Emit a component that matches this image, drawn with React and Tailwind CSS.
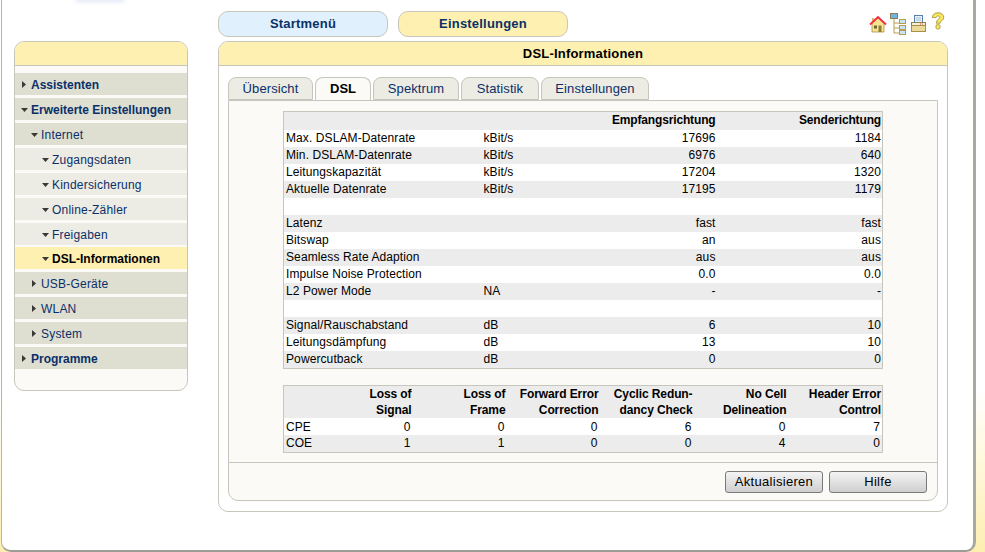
const ARIAL = "font-['Liberation_Sans',Arial,sans-serif]";

const menu = [
  { label: 'Assistenten', level: 1, open: false },
  { label: 'Erweiterte Einstellungen', level: 1, open: true },
  { label: 'Internet', level: 2, open: true },
  { label: 'Zugangsdaten', level: 3, open: true },
  { label: 'Kindersicherung', level: 3, open: true },
  { label: 'Online-Zähler', level: 3, open: true },
  { label: 'Freigaben', level: 3, open: true },
  { label: 'DSL-Informationen', level: 3, open: true, active: true },
  { label: 'USB-Geräte', level: 2, open: false },
  { label: 'WLAN', level: 2, open: false },
  { label: 'System', level: 2, open: false },
  { label: 'Programme', level: 1, open: false },
];

const tabs = [
  { label: 'Übersicht', width: 'w-[85px]' },
  { label: 'DSL', width: 'w-[56px]', active: true },
  { label: 'Spektrum', width: 'w-[86px]' },
  { label: 'Statistik', width: 'w-[78px]' },
  { label: 'Einstellungen', width: 'w-[108px]' },
];

const rates = [
  ['Max. DSLAM-Datenrate', 'kBit/s', '17696', '1184'],
  ['Min. DSLAM-Datenrate', 'kBit/s', '6976', '640'],
  ['Leitungskapazität', 'kBit/s', '17204', '1320'],
  ['Aktuelle Datenrate', 'kBit/s', '17195', '1179'],
  ['', '', '', ''],
  ['Latenz', '', 'fast', 'fast'],
  ['Bitswap', '', 'an', 'aus'],
  ['Seamless Rate Adaption', '', 'aus', 'aus'],
  ['Impulse Noise Protection', '', '0.0', '0.0'],
  ['L2 Power Mode', 'NA', '-', '-'],
  ['', '', '', ''],
  ['Signal/Rauschabstand', 'dB', '6', '10'],
  ['Leitungsdämpfung', 'dB', '13', '10'],
  ['Powercutback', 'dB', '0', '0'],
];

const errorHead = [
  ['Loss of', 'Signal'],
  ['Loss of', 'Frame'],
  ['Forward Error', 'Correction'],
  ['Cyclic Redun-', 'dancy Check'],
  ['No Cell', 'Delineation'],
  ['Header Error', 'Control'],
];

const errors = [
  ['CPE', 0, 0, 0, 6, 0, 7],
  ['COE', 1, 1, 0, 0, 4, 0],
];

function Arrow({ open }) {
  return open ? (
    <svg width="7" height="4" viewBox="0 0 7 4" className="shrink-0">
      <path d="M0 0h7L3.5 4z" fill="#3a3a34" />
    </svg>
  ) : (
    <svg width="4" height="7" viewBox="0 0 4 7" className="shrink-0">
      <path d="M0 0l4 3.5L0 7z" fill="#3a3a34" />
    </svg>
  );
}

function MenuItem({ item }) {
  const bg = item.active ? 'bg-[#fdf0b0]' : item.level === 3 ? 'bg-[#ecebe4]' : 'bg-[#deded1]';
  const pad = item.level === 1 ? 'pl-[6px]' : item.level === 2 ? 'pl-[16px]' : 'pl-[27px]';
  const text = item.active
    ? 'font-bold text-black'
    : item.level === 1
      ? 'font-bold text-[#0a3068]'
      : 'tracking-[0.2px] text-[#0a3068]';
  return (
    <div className={`flex h-[22px] items-center ${bg} ${pad} ${item.active ? '-mt-px pt-[2px]' : 'pt-[1px]'}`}>
      <span className={`flex w-[10px] items-center ${item.open ? '' : 'pl-[1px]'}`}>
        <Arrow open={item.open} />
      </span>
      <span className={`text-[12px] ${text}`}>{item.label}</span>
    </div>
  );
}

function Sidebar() {
  return (
    <div className="mt-[41px] h-[350px] w-[174px] shrink-0 overflow-hidden rounded-[10px] border border-[#c6c6bc] bg-[#fbfaf6]">
      <div className="h-[24px] border-b border-[#c6c6bc] bg-[#fdf0b0]" />
      <div className="flex flex-col gap-[3px] pt-[7px]">
        {menu.map((item) => (
          <MenuItem key={item.label} item={item} />
        ))}
      </div>
    </div>
  );
}

function TopIcons() {
  return (
    <div className="flex items-start pr-[3px]">
      <svg width="18" height="18" viewBox="0 0 18 18" className="mt-[4px]">
        <path d="M3 8.5V17h12V8.5L9 3z" fill="#f6e48f" stroke="#a98f45" strokeWidth="0.8" />
        <path d="M3 3h2v3H3z" fill="#d9bf62" />
        <path d="M1 9.5L9 2l8 7.5" fill="none" stroke="#f5304a" strokeWidth="2" />
        <path d="M9.5 10.5h3V17h-3z" fill="#8f7a3a" />
        <path d="M5 10.5h3v3H5z" fill="#6f6235" />
      </svg>
      <svg width="16" height="22" viewBox="0 0 16 22" className="ml-[3px] mt-[2px]">
        <path d="M4 6v14h5M4 10h5M4 15h5" fill="none" stroke="#b79c50" strokeWidth="1" />
        <rect x="0.5" y="0.5" width="7" height="5" fill="#6fb4e4" stroke="#8a8052" />
        <rect x="9.5" y="6.5" width="6" height="4" fill="#c8e4f0" stroke="#b79c50" />
        <rect x="9.5" y="12.5" width="6" height="4" fill="#c8e4f0" stroke="#b79c50" />
        <rect x="9.5" y="17.5" width="6" height="4" fill="#c8e4f0" stroke="#b79c50" />
      </svg>
      <svg width="15" height="17" viewBox="0 0 15 17" className="ml-[5px] mt-[4px]">
        <rect x="3.5" y="0.5" width="8" height="7" fill="#e6f0f8" stroke="#5a7fa8" />
        <path d="M5 3h5M5 5h5" stroke="#9ab4cc" strokeWidth="0.8" />
        <rect x="0.5" y="7.5" width="14" height="3" fill="#f4efd8" stroke="#8a8052" />
        <rect x="0.5" y="10.5" width="14" height="6" fill="#eadb9a" stroke="#a98f45" />
        <path d="M9 9h1M11 9h1" stroke="#d0453a" />
      </svg>
      <svg width="14" height="18" viewBox="0 0 14 18" className="ml-[5px] mt-[1px]">
        <path
          d="M1.4 5.6C1.4 2.6 3.9 0.8 7 0.8s5.8 1.8 5.8 4.6c0 3.2-3.7 3.4-3.7 5.8H5.3c0-3.8 3.5-4.1 3.5-5.8 0-.9-.7-1.4-1.8-1.4s-1.8.6-1.9 1.6z"
          fill="#f7e65e"
          stroke="#a8983a"
          strokeWidth="0.9"
        />
        <rect x="5" y="12.6" width="4" height="4.4" rx="1.4" fill="#f7e65e" stroke="#a8983a" strokeWidth="0.9" />
      </svg>
    </div>
  );
}

function Tab({ tab }) {
  return (
    <div
      className={`flex h-[23px] items-center justify-center rounded-t-[8px] border border-[#c6c6bc] text-[13px] ${tab.width} ${
        tab.active
          ? 'relative z-10 -mb-px h-[23px] border-b-0 bg-[#fbfaf6] font-bold text-black'
          : 'bg-[#ecebe4] tracking-[0.1px] text-[#0a3068]'
      }`}
    >
      {tab.label}
    </div>
  );
}

function RateTable() {
  return (
    <table className="w-[600px] table-fixed border-collapse border border-[#c6c6bc] bg-white text-[12px] leading-[17px] tracking-[0.1px] text-black">
      <colgroup>
        <col className="w-[200px]" />
        <col className="w-[60px]" />
        <col className="w-[173px]" />
        <col />
      </colgroup>
      <thead>
        <tr className="h-[18px] bg-[#ececec] font-bold tracking-[-0.15px]">
          <th />
          <th />
          <th className="pr-[1px] text-right">Empfangsrichtung</th>
          <th className="pr-[1px] text-right">Senderichtung</th>
        </tr>
      </thead>
      <tbody>
        {rates.map((row, i) => (
          <tr key={i} className={`h-[17px] ${i % 2 === 1 ? 'bg-[#ececec]' : 'bg-white'}`}>
            <td className="p-0 pl-[2px]">{row[0]}</td>
            <td className="p-0">{row[1]}</td>
            <td className="p-0 pr-[1px] text-right">{row[2]}</td>
            <td className="p-0 pr-[1px] text-right">{row[3]}</td>
          </tr>
        ))}
      </tbody>
    </table>
  );
}

function ErrorTable() {
  return (
    <table className="w-[600px] table-fixed border-collapse border border-[#c6c6bc] bg-white text-[12px] leading-[16px] text-black">
      <colgroup>
        <col className="w-[35px]" />
        <col className="w-[94px]" />
        <col className="w-[94px]" />
        <col className="w-[93px]" />
        <col className="w-[94px]" />
        <col className="w-[94px]" />
        <col />
      </colgroup>
      <thead>
        <tr className="h-[33px] bg-[#ececec] font-bold tracking-[-0.1px]">
          <th />
          {errorHead.map((lines) => (
            <th key={lines[0]} className="whitespace-nowrap p-0 pr-[1px] text-right">
              {lines[0]}
              <br />
              {lines[1]}
            </th>
          ))}
        </tr>
      </thead>
      <tbody>
        {errors.map((row, i) => (
          <tr key={row[0]} className={`h-[17px] ${i % 2 === 1 ? 'bg-[#ececec]' : 'bg-white'}`}>
            {row.map((cell, j) => (
              <td key={j} className={j === 0 ? 'p-0 pl-[2px]' : 'p-0 pr-[2px] text-right'}>
                {cell}
              </td>
            ))}
          </tr>
        ))}
      </tbody>
    </table>
  );
}

function Button({ children }) {
  return (
    <button
      type="button"
      className="h-[22px] w-[98px] rounded-[3px] border border-[#7a7a7a] bg-gradient-to-b from-[#f4f4f4] to-[#cfcfcf] text-[13px] leading-[20px] tracking-[0.3px] text-black"
    >
      {children}
    </button>
  );
}

function MainPanel() {
  return (
    <div className="mt-[4px] h-[471px] w-[730px] overflow-hidden rounded-[10px] border border-[#c6c6bc] bg-white">
      <div className="flex h-[24px] items-center justify-center border-b border-[#c6c6bc] bg-[#fdf0b0] text-[13px] font-bold tracking-[0.2px] text-black">
        DSL-Informationen
      </div>
      <div className="px-[9px] pt-[11px]">
        <div className="flex gap-[2px]">
          {tabs.map((tab) => (
            <Tab key={tab.label} tab={tab} />
          ))}
        </div>
        <div className="h-[401px] rounded-b-[10px] border border-[#c6c6bc] bg-[#fbfaf6]">
          <div className="flex h-[362px] flex-col items-center gap-[16px] border-b border-[#c6c6bc] pt-[10px]">
            <RateTable />
            <ErrorTable />
          </div>
          <div className="flex justify-end gap-[6px] pt-[8px] pr-[10px]">
            <Button>Aktualisieren</Button>
            <Button>Hilfe</Button>
          </div>
        </div>
      </div>
    </div>
  );
}

export default function App() {
  const topButton = 'flex h-[26px] w-[170px] items-center justify-center rounded-[10px] border border-[#c6c6bc] text-[13px] font-bold tracking-[0.2px] text-[#0a3068]';
  return (
    <div className={`relative h-[552px] w-[985px] overflow-hidden bg-gradient-to-b from-white from-70% to-[#fdeeb0] ${ARIAL}`}>
      <div className="absolute left-[75px] top-[-6px] h-[8px] w-[50px] rounded-full bg-[#e4e8f6] blur-[2px]" />
      <div className="ml-[1px] flex h-[552px] w-[975px] items-start gap-[30px] rounded-b-[10px] border-x border-b-2 border-l-[#b5b5ac] border-r-[3px] border-r-[#a9a9a2] border-b-[#9c9c95] bg-white pl-[12px]">
        <Sidebar />
        <div className="pt-[11px]">
          <div className="flex items-start justify-between">
            <div className="flex gap-[10px]">
              <div className={`${topButton} bg-[#e0f1fd]`}>Startmenü</div>
              <div className={`${topButton} bg-[#fdf0b0]`}>Einstellungen</div>
            </div>
            <TopIcons />
          </div>
          <MainPanel />
        </div>
      </div>
    </div>
  );
}
